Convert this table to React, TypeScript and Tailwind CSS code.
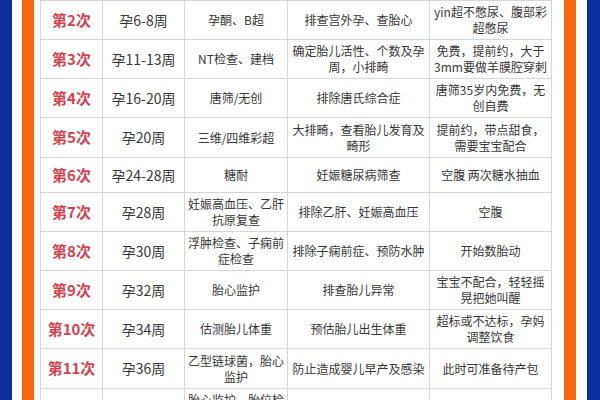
const rows: { h: string; n: string; week: string; item: string; purpose: string; note: string }[] = [
  { h: 'h-[39px]', n: '第2次', week: '孕6-8周', item: '孕酮、B超', purpose: '排查宫外孕、查胎心', note: 'yin超不憋尿、腹部彩\n超憋尿' },
  { h: 'h-[39px]', n: '第3次', week: '孕11-13周', item: 'NT检查、建档', purpose: '确定胎儿活性、个数及孕\n周，小排畸', note: '免费，提前约，大于\n3mm要做羊膜腔穿刺' },
  { h: 'h-[39px]', n: '第4次', week: '孕16-20周', item: '唐筛/无创', purpose: '排除唐氏综合症', note: '唐筛35岁内免费，无\n创自费' },
  { h: 'h-[40px]', n: '第5次', week: '孕20周', item: '三维/四维彩超', purpose: '大排畸，查看胎儿发育及\n畸形', note: '提前约，带点甜食，\n需要宝宝配合' },
  { h: 'h-[35px]', n: '第6次', week: '孕24-28周', item: '糖耐', purpose: '妊娠糖尿病筛查', note: '空腹 两次糖水抽血' },
  { h: 'h-[39px]', n: '第7次', week: '孕28周', item: '妊娠高血压、乙肝\n抗原复查', purpose: '排除乙肝、妊娠高血压', note: '空腹' },
  { h: 'h-[39px]', n: '第8次', week: '孕30周', item: '浮肿检查、子痫前\n症检查', purpose: '排除子痫前症、预防水肿', note: '开始数胎动' },
  { h: 'h-[39px]', n: '第9次', week: '孕32周', item: '胎心监护', purpose: '排查胎儿异常', note: '宝宝不配合，轻轻摇\n晃把她叫醒' },
  { h: 'h-[39px]', n: '第10次', week: '孕34周', item: '估测胎儿体重', purpose: '预估胎儿出生体重', note: '超标或不达标，孕妈\n调整饮食' },
  { h: 'h-[40px]', n: '第11次', week: '孕36周', item: '乙型链球菌，胎心\n监护', purpose: '防止造成婴儿早产及感染', note: '此时可准备待产包' },
];

const cols = 'grid grid-cols-[62px_82px_103px_142px_122px]';
const cell = 'flex items-center justify-center border-r border-b border-[#d6d6d6] text-center';

export default function App() {
  return (
    <div className="flex h-[400px] w-[600px] overflow-hidden bg-white font-['Noto_Sans_CJK_SC',sans-serif] text-[#363636]">
      <div className="w-[12px] shrink-0 bg-[#0c2e9f]" />
      <div className="w-[10px] shrink-0 bg-white" />
      <div className="w-[12px] shrink-0 bg-[#f6660e]" />
      <div className="w-[6px] shrink-0 bg-white" />

      <div className="w-[512px] shrink-0 border-l border-t border-[#d6d6d6]">
        {rows.map((r) => (
          <div key={r.n} className={`${cols} ${r.h}`}>
            <div className={`${cell} text-[15px] font-bold text-[#d2444f]`}>{r.n}</div>
            <div className={`${cell} text-[14px]`}>{r.week}</div>
            <div className={`${cell} whitespace-pre text-[12px] leading-[16px]`}>{r.item}</div>
            <div className={`${cell} whitespace-pre text-[12px] leading-[16px]`}>{r.purpose}</div>
            <div className={`${cell} whitespace-pre text-[12px] leading-[16px]`}>{r.note}</div>
          </div>
        ))}
        {/* last row runs off the bottom; only the top of its third cell shows */}
        <div className={`${cols} h-[56px]`}>
          <div className={cell} />
          <div className={cell} />
          <div className={`${cell} items-start whitespace-pre pt-[3px] text-[12px] leading-[16px]`}>胎心监护，胎位检</div>
          <div className={cell} />
          <div className={cell} />
        </div>
      </div>

      <div className="w-[12px] shrink-0 bg-white" />
      <div className="w-[12px] shrink-0 bg-[#f6660e]" />
      <div className="w-[11px] shrink-0 bg-white" />
      <div className="flex-1 bg-[#0c2e9f]" />
    </div>
  );
}
